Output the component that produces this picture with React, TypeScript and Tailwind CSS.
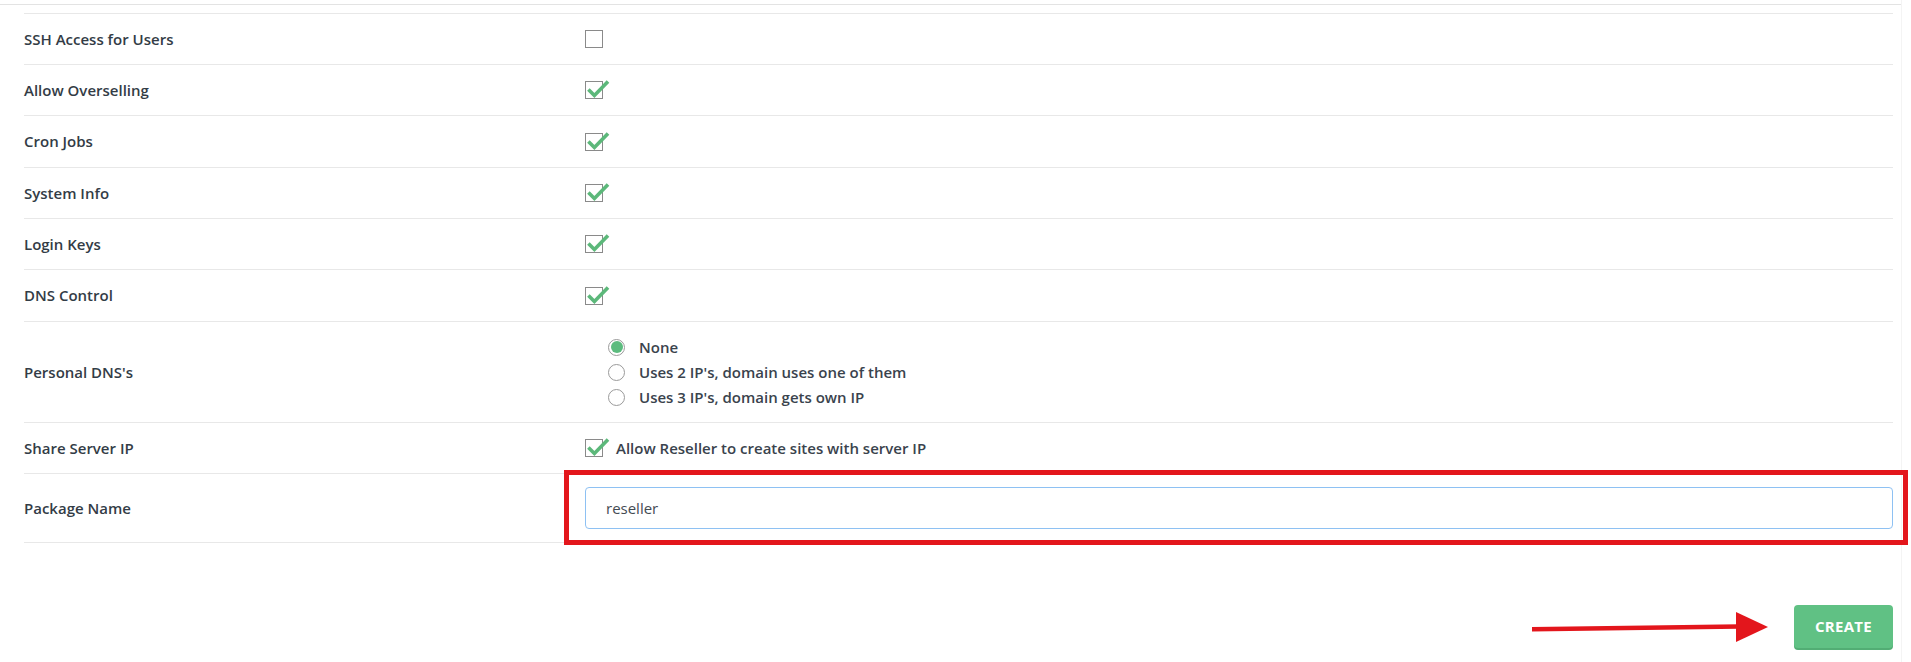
import React from "react";

type RowProps = {
  label: string;
  height: string;
  last?: boolean;
  children?: React.ReactNode;
};

function Row({ label, height, last, children }: RowProps) {
  return (
    <div
      className={`flex items-center border-t border-[#e8e8e8] ${height} ${
        last ? "border-b" : ""
      }`}
    >
      <div className="w-[561px] shrink-0 text-[15px] font-semibold text-[#333c46]">
        {label}
      </div>
      <div className="flex-1">{children}</div>
    </div>
  );
}

function CheckBox({ checked }: { checked?: boolean }) {
  return (
    <div className="relative h-[18px] w-[18px] shrink-0 border border-[#8a8a8a] bg-white">
      {checked && (
        <svg
          className="absolute left-[-1px] top-[-4px] overflow-visible"
          width="26"
          height="22"
          viewBox="0 0 26 22"
          fill="none"
        >
          <path
            d="M3.4 11.4 L9.4 17.4 L23 3.4"
            stroke="#5cb87a"
            strokeWidth="3.6"
            strokeLinejoin="miter"
          />
        </svg>
      )}
    </div>
  );
}

function Radio({ checked, label }: { checked?: boolean; label: string }) {
  return (
    <div className="flex h-[25px] items-center">
      <div className="flex h-[17px] w-[17px] items-center justify-center rounded-full border border-[#9a9a9a] bg-white">
        {checked && <div className="h-[12px] w-[12px] rounded-full bg-[#5cbb7e]" />}
      </div>
      <span className="ml-[14px] text-[15px] font-semibold text-[#3a434d]">
        {label}
      </span>
    </div>
  );
}

function Arrow() {
  return (
    <svg width="237" height="32" viewBox="0 0 237 32" fill="none">
      <path d="M0 18.2 L207 15.4" stroke="#e3161c" strokeWidth="4.5" />
      <path d="M204 1 L236 16 L204 31 Z" fill="#e3161c" />
    </svg>
  );
}

export default function App() {
  return (
    <div className="min-h-[662px] w-full bg-white font-['Open_Sans',sans-serif]">
      <div className="min-h-[662px] w-[1902px] border-r border-[#f4f4f4]">
        <div className="h-[5px] border-b border-[#e3e3e3]" />
        <div className="pl-[24px] pr-[8px] pt-[8px]">
          <Row label="SSH Access for Users" height="h-[51px]">
            <CheckBox />
          </Row>
          <Row label="Allow Overselling" height="h-[51px]">
            <CheckBox checked />
          </Row>
          <Row label="Cron Jobs" height="h-[52px]">
            <CheckBox checked />
          </Row>
          <Row label="System Info" height="h-[51px]">
            <CheckBox checked />
          </Row>
          <Row label="Login Keys" height="h-[51px]">
            <CheckBox checked />
          </Row>
          <Row label="DNS Control" height="h-[52px]">
            <CheckBox checked />
          </Row>
          <Row label="Personal DNS's" height="h-[101px]">
            <div className="flex flex-col pl-[23px]">
              <Radio checked label="None" />
              <Radio label="Uses 2 IP's, domain uses one of them" />
              <Radio label="Uses 3 IP's, domain gets own IP" />
            </div>
          </Row>
          <Row label="Share Server IP" height="h-[51px]">
            <div className="flex items-center">
              <CheckBox checked />
              <span className="ml-[13px] text-[15px] font-semibold text-[#3a434d]">
                Allow Reseller to create sites with server IP
              </span>
            </div>
          </Row>
          <Row label="Package Name" height="h-[70px]" last>
            <div className="relative">
              <input
                readOnly
                value="reseller"
                className="h-[42px] w-full rounded-[4px] border border-[#8ec1f3] bg-white px-[20px] text-[15px] text-[#444b53] outline-none"
              />
              <div className="pointer-events-none absolute -bottom-[16px] -left-[21px] -right-[15px] -top-[17px] border-[5px] border-[#e3161c]" />
            </div>
          </Row>

          <div className="mt-[62px] flex items-center justify-end gap-[25px]">
            <Arrow />
            <button className="h-[43px] w-[99px] rounded-[4px] bg-[#60c184] text-[15px] font-bold tracking-[0.3px] text-white shadow-[0_2px_0_#52ad74]">
              CREATE
            </button>
          </div>
        </div>
      </div>
    </div>
  );
}
